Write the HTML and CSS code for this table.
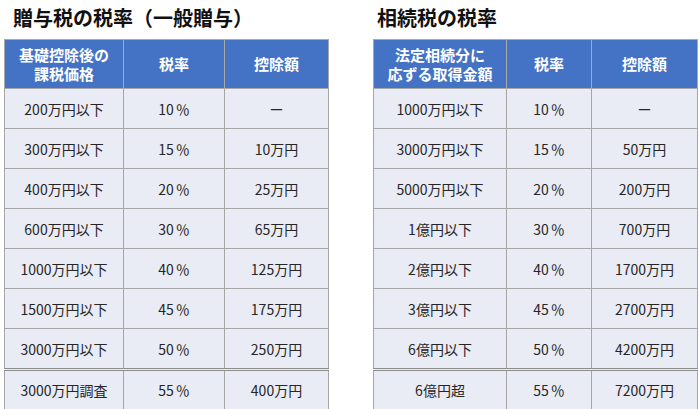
FILE: index.html
```html
<!DOCTYPE html>
<html lang="ja">
<head>
<meta charset="utf-8">
<link rel="stylesheet" href="styles.css">
</head>
<body>
<div class="page">
  <section class="block block-left">
    <h2 class="title title-left">贈与税の税率（一般贈与）</h2>
    <table class="rate rate-left">
      <thead>
        <tr><th><span class="hl">基礎控除後の</span><span class="hl">課税価格</span></th><th>税率</th><th>控除額</th></tr>
      </thead>
      <tbody>
        <tr><td>200万円以下</td><td>10<span class="pct">％</span></td><td>ー</td></tr>
        <tr><td>300万円以下</td><td>15<span class="pct">％</span></td><td>10万円</td></tr>
        <tr><td>400万円以下</td><td>20<span class="pct">％</span></td><td>25万円</td></tr>
        <tr><td>600万円以下</td><td>30<span class="pct">％</span></td><td>65万円</td></tr>
        <tr><td>1000万円以下</td><td>40<span class="pct">％</span></td><td>125万円</td></tr>
        <tr><td>1500万円以下</td><td>45<span class="pct">％</span></td><td>175万円</td></tr>
        <tr><td>3000万円以下</td><td>50<span class="pct">％</span></td><td>250万円</td></tr>
        <tr class="last"><td>3000万円調査</td><td>55<span class="pct">％</span></td><td>400万円</td></tr>
      </tbody>
    </table>
  </section>
  <section class="block block-right">
    <h2 class="title title-right">相続税の税率</h2>
    <table class="rate rate-right">
      <thead>
        <tr><th><span class="hl">法定相続分に</span><span class="hl">応ずる取得金額</span></th><th>税率</th><th>控除額</th></tr>
      </thead>
      <tbody>
        <tr><td>1000万円以下</td><td>10<span class="pct">％</span></td><td>ー</td></tr>
        <tr><td>3000万円以下</td><td>15<span class="pct">％</span></td><td>50万円</td></tr>
        <tr><td>5000万円以下</td><td>20<span class="pct">％</span></td><td>200万円</td></tr>
        <tr><td>1億円以下</td><td>30<span class="pct">％</span></td><td>700万円</td></tr>
        <tr><td>2億円以下</td><td>40<span class="pct">％</span></td><td>1700万円</td></tr>
        <tr><td>3億円以下</td><td>45<span class="pct">％</span></td><td>2700万円</td></tr>
        <tr><td>6億円以下</td><td>50<span class="pct">％</span></td><td>4200万円</td></tr>
        <tr class="last"><td>6億円超</td><td>55<span class="pct">％</span></td><td>7200万円</td></tr>
      </tbody>
    </table>
  </section>
</div>
</body>
</html>
```

FILE: styles.css
```css
html, body {
  margin: 0;
  padding: 0;
  background: #ffffff;
}
body {
  font-family: "Noto Sans CJK JP", "Noto Sans", sans-serif;
  color: #262626;
}
.page {
  display: flex;
  gap: 44px;
  padding-left: 4px;
}
.block {
  width: 325px;
}
.title {
  margin: 0;
  height: 39px;
  line-height: 35px;
  font-size: 20px;
  font-weight: 700;
  color: #111;
  white-space: nowrap;
}
.title-left { padding-left: 9px; }
.title-right { padding-left: 4px; }
.rate {
  border-collapse: collapse;
  table-layout: fixed;
  width: 325px;
}
.rate-left th:nth-child(1) { width: 118px; }
.rate-left th:nth-child(2) { width: 100px; }
.rate-right th:nth-child(1) { width: 132px; }
.rate-right th:nth-child(2) { width: 84px; }
.rate th {
  background: #4472c4;
  color: #ffffff;
  font-size: 15px;
  font-weight: 700;
  line-height: 20px;
  height: 48px;
  padding: 0;
  border: 1px solid #a9a9a9;
  text-align: center;
}
.hl {
  display: block;
  height: 19px;
  line-height: 19px;
}
.rate td {
  background: #e9ebf5;
  font-size: 14px;
  height: 39px;
  padding: 0;
  border: 1px solid #a6a6a6;
  text-align: center;
}
.pct {
  padding-left: 2px;
}
.rate tr.last td {
  border-top: 3px double #8c8c8c;
  height: 38px;
}
```
